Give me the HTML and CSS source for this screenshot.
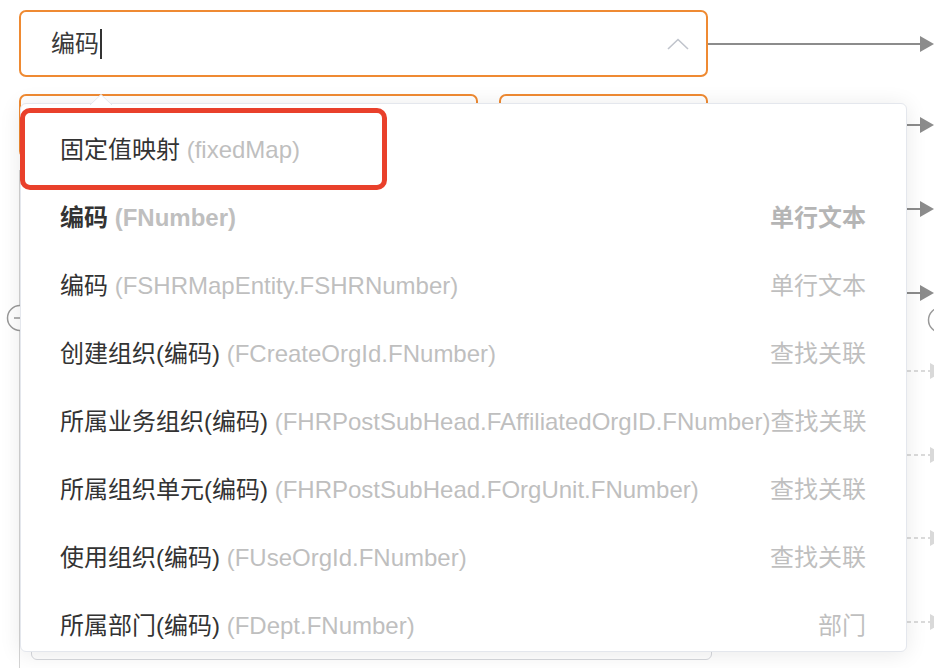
FILE: index.html
```html
<!DOCTYPE html>
<html lang="zh-CN">
<head>
<meta charset="utf-8">
<title>字段映射</title>
<link rel="stylesheet" href="styles.css">
</head>
<body>
<div class="stage">
  <div class="form">
    <div class="select-row">
      <div class="select">
        <span class="select-value">编码</span><span class="caret"></span>
        <svg class="chevron" width="22" height="12" viewBox="0 0 22 12"><path d="M1 11 L11 1.5 L21 11" fill="none" stroke="#c0c4cc" stroke-width="1.6"/></svg>
      </div>
      <div class="connector">
        <span class="line"></span>
        <svg class="head" width="14" height="16" viewBox="0 0 14 16"><path d="M0 0 L14 8 L0 16 Z" fill="#8c8c8c"/></svg>
      </div>
    </div>
    <div class="field-row">
      <div class="field field-wide"></div>
      <div class="field field-narrow"></div>
    </div>
    <div class="group">
      <div class="inner-box"></div>
    </div>
  </div>

  <svg class="handle handle-left" width="28" height="28" viewBox="0 0 28 28"><circle cx="14" cy="14" r="12.5" fill="#fff" stroke="#999" stroke-width="1.5"/><path d="M8 14 H20" stroke="#999" stroke-width="1.5"/></svg>
  <svg class="handle handle-right" width="28" height="28" viewBox="0 0 28 28"><circle cx="14" cy="14" r="12.5" fill="#fff" stroke="#999" stroke-width="1.5"/><path d="M8 14 H20" stroke="#999" stroke-width="1.5"/></svg>

  <svg class="edges" width="40" height="668" viewBox="0 0 40 668">
    <g fill="#8c8c8c" stroke="#8c8c8c" stroke-width="2">
      <line x1="0" y1="125" x2="14" y2="125"/><path d="M13 117 L27 125 L13 133 Z" stroke="none"/>
      <line x1="0" y1="209" x2="14" y2="209"/><path d="M13 201 L27 209 L13 217 Z" stroke="none"/>
      <line x1="0" y1="293" x2="14" y2="293"/><path d="M13 285 L27 293 L13 301 Z" stroke="none"/>
    </g>
    <g fill="#d9d9d9" stroke="#d0d0d0" stroke-width="1.5" stroke-dasharray="4 3">
      <line x1="0" y1="371" x2="23" y2="371"/><path d="M23 363 L37 371 L23 379 Z" stroke="none"/>
      <line x1="0" y1="455" x2="23" y2="455"/><path d="M23 447 L37 455 L23 463 Z" stroke="none"/>
      <line x1="0" y1="538" x2="23" y2="538"/><path d="M23 530 L37 538 L23 546 Z" stroke="none"/>
      <line x1="0" y1="622" x2="23" y2="622"/><path d="M23 614 L37 622 L23 630 Z" stroke="none"/>
    </g>
  </svg>

  <div class="popup">
    <svg class="popup-arrow" width="22" height="11" viewBox="0 0 22 11"><path d="M0 11 L11 0.5 L22 11" fill="#fff" stroke="#e4e7ed" stroke-width="1"/></svg>
    <ul class="options">
      <li class="option"><span class="label">固定值映射 <span class="code">(fixedMap)</span></span></li>
      <li class="option selected"><span class="label">编码 <span class="code">(FNumber)</span></span><span class="type">单行文本</span></li>
      <li class="option"><span class="label">编码 <span class="code">(FSHRMapEntity.FSHRNumber)</span></span><span class="type">单行文本</span></li>
      <li class="option"><span class="label">创建组织(编码) <span class="code">(FCreateOrgId.FNumber)</span></span><span class="type">查找关联</span></li>
      <li class="option"><span class="label">所属业务组织(编码) <span class="code">(FHRPostSubHead.FAffiliatedOrgID.FNumber)</span></span><span class="type">查找关联</span></li>
      <li class="option"><span class="label">所属组织单元(编码) <span class="code">(FHRPostSubHead.FOrgUnit.FNumber)</span></span><span class="type">查找关联</span></li>
      <li class="option"><span class="label">使用组织(编码) <span class="code">(FUseOrgId.FNumber)</span></span><span class="type">查找关联</span></li>
      <li class="option"><span class="label">所属部门(编码) <span class="code">(FDept.FNumber)</span></span><span class="type">部门</span></li>
    </ul>
  </div>

  <div class="annotation"></div>
</div>
</body>
</html>
```

FILE: styles.css
```css
* { box-sizing: border-box; }

html, body {
  margin: 0;
  padding: 0;
  background: #fff;
}

body {
  font-family: "Liberation Sans", "Noto Sans CJK SC", sans-serif;
  color: #333;
}

.stage {
  position: relative;
  width: 934px;
  height: 668px;
  overflow: hidden;
  background: #fff;
}

.form {
  padding: 10px 0 0 19px;
}

.select-row {
  display: flex;
  align-items: center;
}

.select {
  position: relative;
  width: 689px;
  height: 67px;
  border: 2px solid #ef8a32;
  border-radius: 7px;
  display: flex;
  align-items: center;
  padding-left: 30px;
}

.select-value {
  font-size: 24px;
  line-height: 30px;
  color: #3a3a3a;
}

.caret {
  display: inline-block;
  width: 1.5px;
  height: 30px;
  background: #333;
  margin-left: 1px;
}

.chevron {
  position: absolute;
  right: 17px;
  top: 26px;
}

.connector {
  flex: 1;
  display: flex;
  align-items: center;
  height: 16px;
}

.connector .line {
  flex: 1;
  height: 2px;
  background: #8c8c8c;
}

.connector .head {
  flex: none;
  display: block;
}

.field-row {
  display: flex;
  gap: 21px;
  margin-top: 17px;
}

.field {
  height: 64px;
  border: 2px solid #ef8a32;
  border-radius: 7px;
}

.field-wide { width: 459px; }
.field-narrow { width: 209px; }

.group {
  margin-top: 12px;
  padding-top: 40px;
  height: 600px;
  border-left: 1.5px solid #d4d4d4;
}

.inner-box {
  margin-left: 11px;
  width: 681px;
  height: 450px;
  border: 1.5px solid #d6d8dd;
  border-radius: 6px;
}

.handle {
  position: absolute;
}

.handle-left { left: 6px; top: 304px; }
.handle-right { left: 927px; top: 306px; }

.edges {
  position: absolute;
  left: 907px;
  top: 0;
}

.popup {
  position: absolute;
  left: 20px;
  top: 103px;
  width: 887px;
  height: 549px;
  background: #fff;
  border: 1px solid #e4e7ed;
  border-radius: 6px;
  box-shadow: 0 2px 22px rgba(0, 0, 0, 0.09);
}

.popup-arrow {
  position: absolute;
  left: 69px;
  top: -10px;
  display: block;
}

.options {
  list-style: none;
  margin: 0;
  padding: 12px 40px 0 39px;
  height: 100%;
  overflow: hidden;
  border-radius: 6px;
}

.option {
  display: flex;
  align-items: center;
  height: 68px;
  font-size: 24px;
  line-height: 30px;
  white-space: nowrap;
}

.label {
  flex: none;
  color: #333;
}

.code {
  color: #bfbfbf;
}

.type {
  flex: none;
  margin-left: auto;
  color: #bfbfbf;
}

.option.selected .label,
.option.selected .type {
  font-weight: 700;
}

.option.selected .type {
  color: #b5b5b5;
}

.annotation {
  position: absolute;
  left: 20px;
  top: 108px;
  width: 367px;
  height: 82px;
  border: 5px solid #e9402b;
  border-radius: 10px;
}
```
